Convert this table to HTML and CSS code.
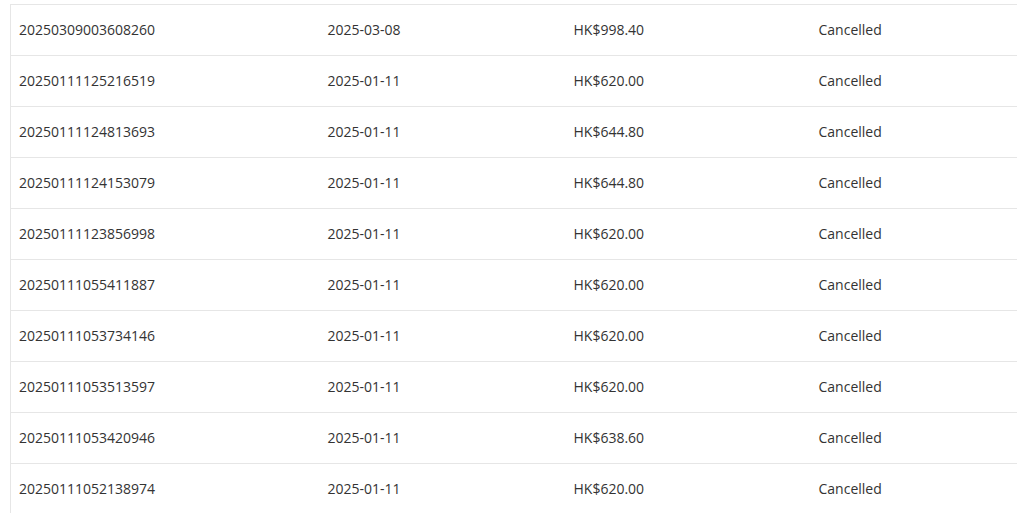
FILE: index.html
```html
<!DOCTYPE html>
<html>
<head>
<meta charset="utf-8">
<link rel="stylesheet" href="styles.css">
</head>
<body>
<div class="wrap">
<table class="orders">
<tbody>
<tr><td>20250309003608260</td><td>2025-03-08</td><td>HK$998.40</td><td>Cancelled</td></tr>
<tr><td>20250111125216519</td><td>2025-01-11</td><td>HK$620.00</td><td>Cancelled</td></tr>
<tr><td>20250111124813693</td><td>2025-01-11</td><td>HK$644.80</td><td>Cancelled</td></tr>
<tr><td>20250111124153079</td><td>2025-01-11</td><td>HK$644.80</td><td>Cancelled</td></tr>
<tr><td>20250111123856998</td><td>2025-01-11</td><td>HK$620.00</td><td>Cancelled</td></tr>
<tr><td>20250111055411887</td><td>2025-01-11</td><td>HK$620.00</td><td>Cancelled</td></tr>
<tr><td>20250111053734146</td><td>2025-01-11</td><td>HK$620.00</td><td>Cancelled</td></tr>
<tr><td>20250111053513597</td><td>2025-01-11</td><td>HK$620.00</td><td>Cancelled</td></tr>
<tr><td>20250111053420946</td><td>2025-01-11</td><td>HK$638.60</td><td>Cancelled</td></tr>
<tr><td>20250111052138974</td><td>2025-01-11</td><td>HK$620.00</td><td>Cancelled</td></tr>
</tbody>
</table>
</div>
</body>
</html>
```
FILE: styles.css
```css
html, body {
  margin: 0;
  padding: 0;
  background: #fff;
  overflow: hidden;
}
body {
  font-family: "Open Sans", "Liberation Sans", sans-serif;
  font-size: 14px;
  color: #333;
}
.wrap {
  padding: 4px 0 0 10px;
}
.orders {
  border-collapse: collapse;
  border-left: 1px solid #e6e6e6;
  table-layout: fixed;
  width: 1007px;
}
.orders td {
  border-top: 1px solid #e6e6e6;
  height: 51px;
  padding: 0 8px 2px;
  box-sizing: border-box;
  vertical-align: middle;
  white-space: nowrap;
}
.orders td:nth-child(1) { width: 309px; }
.orders td:nth-child(2) { width: 246px; }
.orders td:nth-child(3) { width: 245px; }
.orders td:nth-child(4) { width: auto; }
```
